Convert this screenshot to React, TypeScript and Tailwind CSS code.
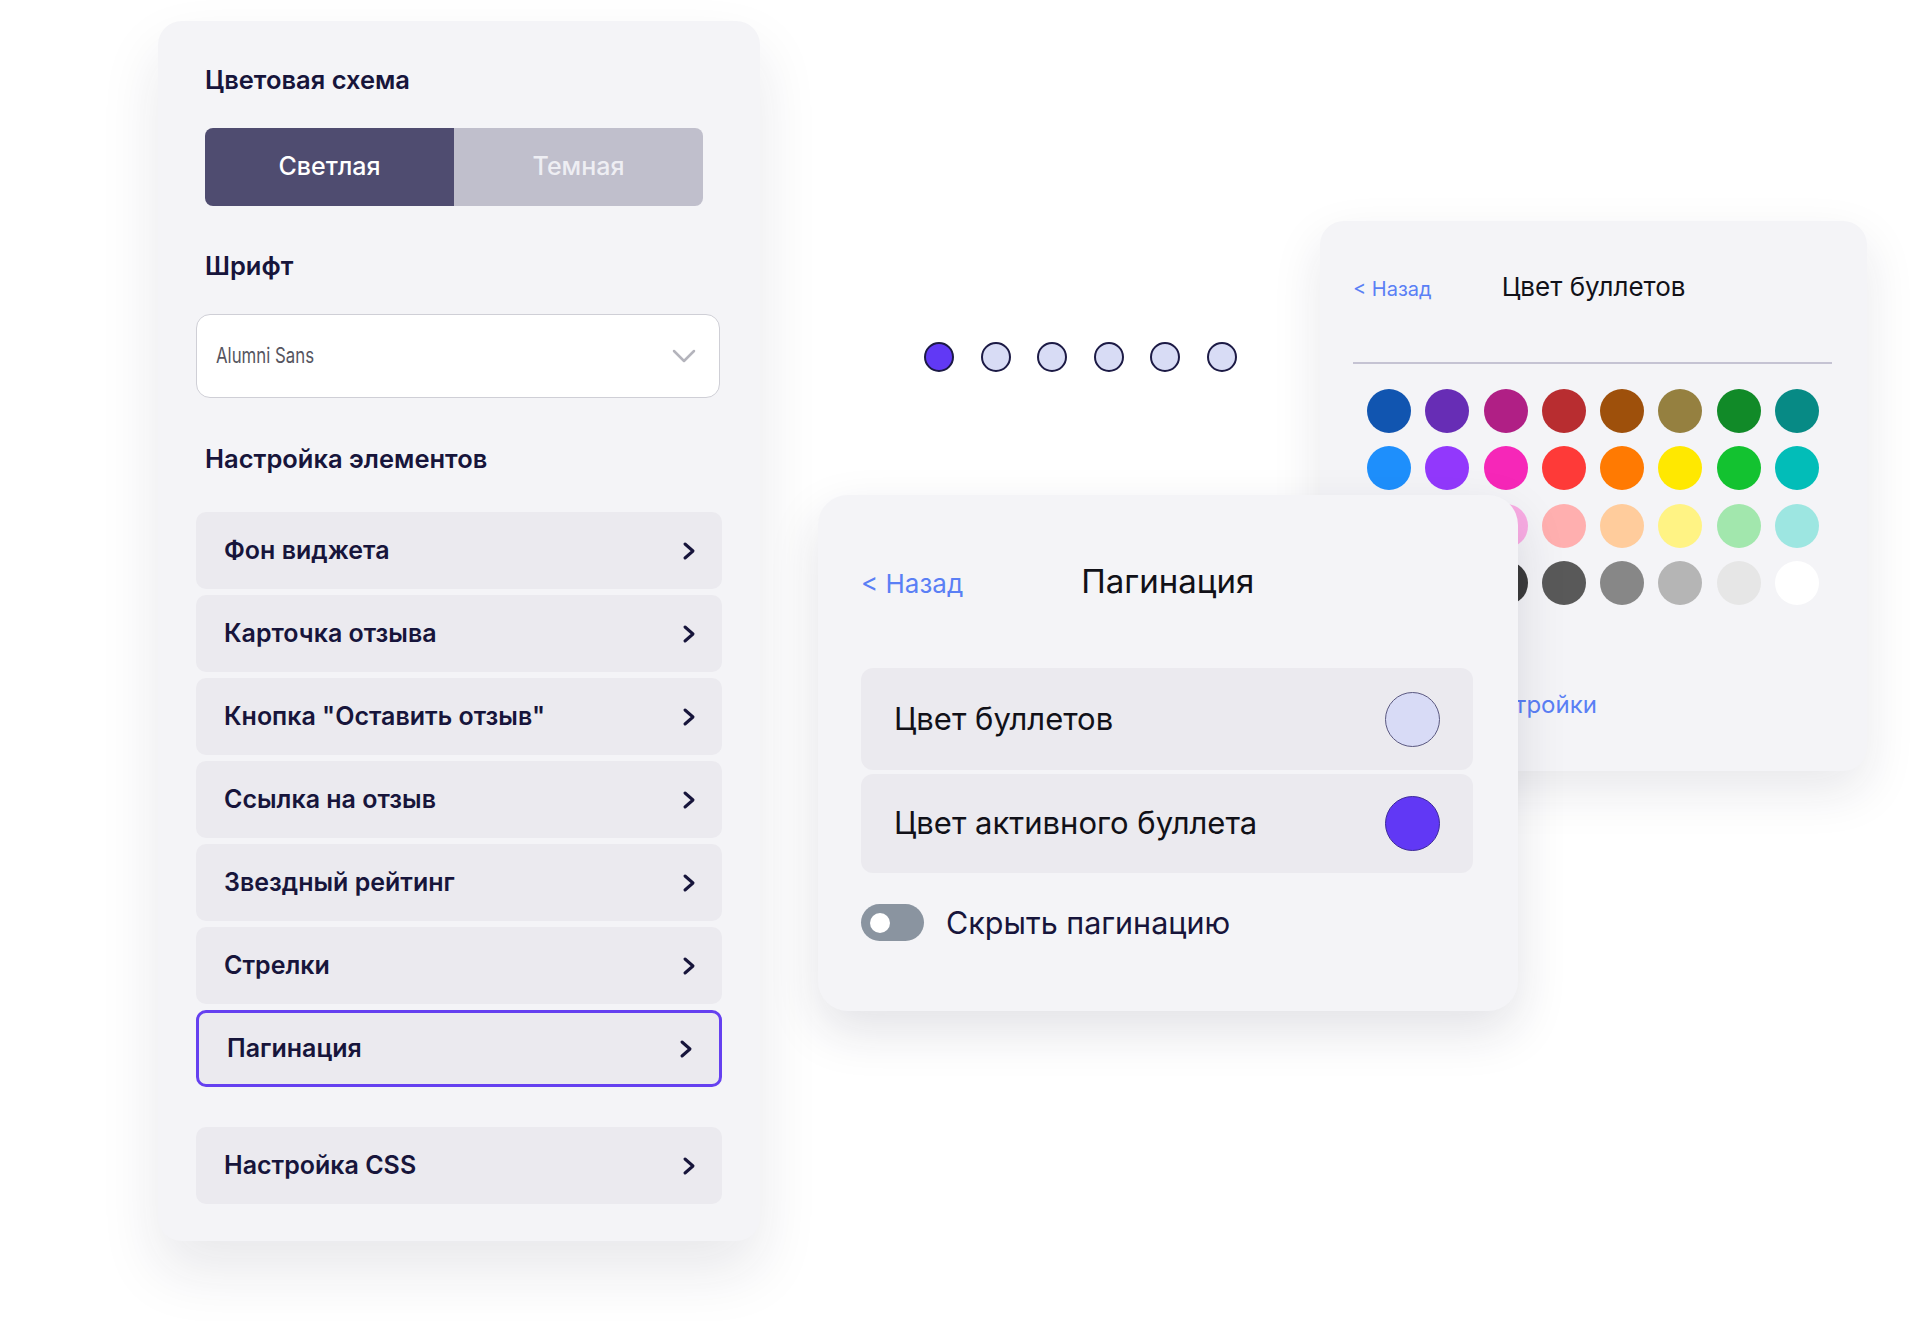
import { useState } from 'react';

const elements = [
    'Фон виджета',
    'Карточка отзыва',
    'Кнопка "Оставить отзыв"',
    'Ссылка на отзыв',
    'Звездный рейтинг',
    'Стрелки',
    'Пагинация',
];

const swatches = [
    '#1155b0', '#672db5', '#b01f85', '#b82d30', '#9e500b', '#958040', '#118a28', '#078a85',
    '#1e8ffc', '#9238fc', '#f627b8', '#fe3a38', '#ff7a02', '#ffe800', '#13c230', '#02bdb8',
    '#a5d0fe', '#d3b5fe', '#f9ace3', '#ffafaf', '#ffcc9c', '#fff384', '#a2e7ad', '#9de6e1',
    '#000000', '#1f1f1f', '#3a3a3a', '#595959', '#878787', '#b5b5b5', '#e6e6e6', '#ffffff',
];

function ChevronRight() {
    return (
        <svg width="14" height="20" viewBox="0 0 14 20" fill="none">
            <path d="M3 3l8 7-8 7" stroke="#17153b" strokeWidth="3" strokeLinecap="round" strokeLinejoin="round" />
        </svg>
    );
}

function ChevronDown() {
    return (
        <svg width="24" height="14" viewBox="0 0 24 14" fill="none">
            <path d="M2 2l10 10 10-10" stroke="#b4b4bc" strokeWidth="2.5" strokeLinecap="round" strokeLinejoin="round" />
        </svg>
    );
}

function Row({ label, active }: { label: string; active?: boolean }) {
    return (
        <div
            className={`flex h-[77px] items-center justify-between rounded-[10px] bg-[#ebeaef] pl-[28px] pr-[26px] ${
                active ? 'border-[3px] border-[#6540f0] pl-[25px] pr-[23px]' : ''
            }`}
        >
            <span className="text-[25px] leading-none font-semibold text-[#17153b]">{label}</span>
            <ChevronRight />
        </div>
    );
}

function SettingsPanel() {
    return (
        <aside className="mt-[21px] ml-[158px] h-[1220px] w-[602px] shrink-0 rounded-[24px] bg-[#f4f4f7] px-[38px] pt-[47px] shadow-[0_30px_60px_rgba(30,30,60,0.10)]">
            <h3 className="ml-[9px] text-[25.5px] leading-[24px] font-semibold text-[#17153b]">Цветовая схема</h3>
            <div className="mt-[36px] ml-[9px] flex h-[78px] w-[498px] overflow-hidden rounded-[8px]">
                <div className="flex flex-1 items-center justify-center bg-[#4f4c70] text-[25px] font-medium text-white">
                    Светлая
                </div>
                <div className="flex flex-1 items-center justify-center bg-[#c0bfcc] text-[25px] font-medium text-[#eeeef3]">
                    Темная
                </div>
            </div>

            <h3 className="mt-[48px] ml-[9px] text-[25.5px] leading-[24px] font-semibold text-[#17153b]">Шрифт</h3>
            <div className="mt-[36px] flex h-[84px] w-[524px] items-center justify-between rounded-[14px] border border-[#cfcfd6] bg-white pl-[19px] pr-[23px]">
                <span className="inline-block origin-left scale-x-[0.8] text-[21px] text-[#555560]">Alumni Sans</span>
                <ChevronDown />
            </div>

            <h3 className="mt-[49px] ml-[9px] text-[25.5px] leading-[24px] font-semibold text-[#17153b]">Настройка элементов</h3>
            <div className="mt-[41px] flex flex-col gap-[6px]">
                {elements.map((e) => (
                    <Row key={e} label={e} active={e === 'Пагинация'} />
                ))}
            </div>
            <div className="mt-[40px]">
                <Row label="Настройка CSS" />
            </div>
        </aside>
    );
}

function BulletColors() {
    return (
        <div className="absolute top-[221px] left-[560px] h-[550px] w-[547px] rounded-[24px] bg-[#f4f4f7] px-[33px] pt-[53px] shadow-[0_20px_50px_rgba(30,30,60,0.10)]">
            <div className="flex items-baseline">
                <span className="text-[20px] leading-none text-[#5a7ff5]">&lt; Назад</span>
                <span className="ml-[70px] text-[26px] leading-none text-[#111118]">Цвет буллетов</span>
            </div>
            <div className="mt-[62px] h-[2px] w-[479px] bg-[#c5c3d3]" />
            <div className="mt-[25px] ml-[14px] grid w-[452px] grid-cols-8 gap-x-[14.3px] gap-y-[13.3px]">
                {swatches.map((c, i) => (
                    <div key={i} className="h-[44px] w-[44px] rounded-full" style={{ backgroundColor: c }} />
                ))}
            </div>
            <div className="mt-[88px] text-[24px] leading-none text-[#5a7ff5]">Сбросить настройки</div>
        </div>
    );
}

function PaginationCard() {
    const [hidden, setHidden] = useState(false);
    return (
        <div className="absolute top-[495px] left-[58px] h-[516px] w-[700px] rounded-[30px] bg-[#f4f4f7] pt-[70px] pr-[45px] pl-[43px] shadow-[0_20px_50px_rgba(30,30,60,0.13)]">
            <div className="flex items-baseline">
                <span className="text-[26px] leading-none text-[#5a7ff5]">&lt; Назад</span>
                <span className="ml-[118px] text-[33px] leading-none text-[#111118]">Пагинация</span>
            </div>
            <div className="mt-[70px] flex flex-col gap-[4px]">
                <div className="flex h-[102px] items-center justify-between rounded-[12px] bg-[#ebeaef] px-[33px]">
                    <span className="text-[31px] text-[#111118]">Цвет буллетов</span>
                    <div className="h-[55px] w-[55px] rounded-full border-[1.5px] border-[#5a5880] bg-[#d8dbf6]" />
                </div>
                <div className="flex h-[99px] items-center justify-between rounded-[12px] bg-[#ebeaef] px-[33px]">
                    <span className="text-[31px] text-[#111118]">Цвет активного буллета</span>
                    <div className="h-[55px] w-[55px] rounded-full border-[1.5px] border-[#3d2a9a] bg-[#6138f5]" />
                </div>
            </div>
            <div className="mt-[27px] flex items-center gap-[22px]">
                <button
                    onClick={() => setHidden(!hidden)}
                    className="flex h-[37px] w-[63px] items-center rounded-full bg-[#8a94a0] px-[9px]"
                >
                    <span className="h-[20px] w-[20px] rounded-full bg-white" />
                </button>
                <span className="text-[30.5px] text-[#17153b]">Скрыть пагинацию</span>
            </div>
        </div>
    );
}

export default function App() {
    return (
        <div className="flex h-[1321px] w-[1920px] overflow-hidden bg-white font-['Inter',sans-serif]">
            <SettingsPanel />
            <div className="relative flex-1">
                <div className="mt-[342px] ml-[164px] flex gap-[26.6px]">
                    {[0, 1, 2, 3, 4, 5].map((i) => (
                        <div
                            key={i}
                            className={`h-[30px] w-[30px] rounded-full border-2 border-[#1c1a45] ${
                                i === 0 ? 'bg-[#6139f5]' : 'bg-[#d8dcf5]'
                            }`}
                        />
                    ))}
                </div>
                <BulletColors />
                <PaginationCard />
            </div>
        </div>
    );
}
